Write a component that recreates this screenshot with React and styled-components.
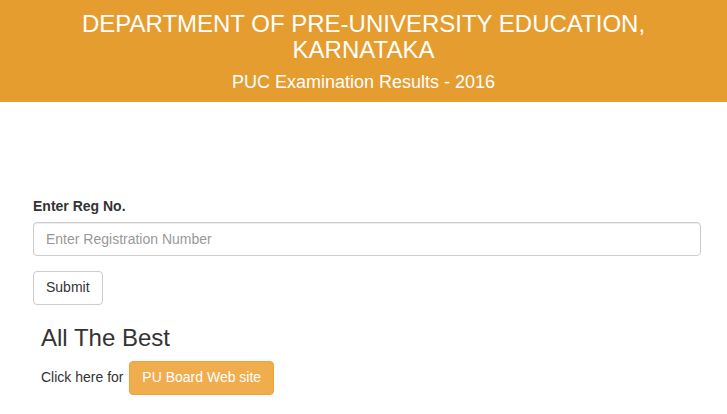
import React from "react";
import styled, { createGlobalStyle } from "styled-components";

const GlobalStyle = createGlobalStyle`
  * {
    box-sizing: border-box;
  }
  body {
    margin: 0;
    font-family: "Liberation Sans", Arial, Helvetica, sans-serif;
    font-size: 14px;
    line-height: 1.42857;
    color: #333;
    background: #fff;
  }
`;

const Header = styled.header`
  background-color: #e59d2f;
  color: #fff;
  text-align: center;
  padding: 11px 15px 9px;
  height: 102px;
`;

const Title = styled.h3`
  margin: 0 0 9px;
  font-size: 24px;
  font-weight: 400;
  line-height: 1.1;
`;

const SubTitle = styled.h4`
  margin: 0;
  font-size: 18px;
  font-weight: 400;
  line-height: 1.1;
`;

const Form = styled.form`
  padding: 95px 26px 0 33px;
`;

const FormGroup = styled.div`
  margin-bottom: 15px;
`;

const Label = styled.label`
  display: block;
  font-weight: 700;
  margin-bottom: 5px;
`;

const Input = styled.input`
  display: block;
  width: 100%;
  height: 34px;
  padding: 6px 12px;
  font-family: inherit;
  font-size: 14px;
  color: #555;
  background: #fff;
  border: 1px solid #ccc;
  border-radius: 4px;
  box-shadow: inset 0 1px 1px rgba(0, 0, 0, 0.075);
  outline: none;

  &::placeholder {
    color: #999;
  }
`;

const Button = styled.button`
  display: inline-block;
  height: 34px;
  padding: 6px 12px;
  margin-left: ${(p) => (p.$warning ? "2px" : "0")};
  font-family: inherit;
  font-size: 14px;
  line-height: 1.42857;
  border-radius: 4px;
  cursor: pointer;
  color: ${(p) => (p.$warning ? "#fff" : "#333")};
  background: ${(p) => (p.$warning ? "#f0ad4e" : "#fff")};
  border: 1px solid ${(p) => (p.$warning ? "#eea236" : "#ccc")};
`;

const Footer = styled.div`
  padding-left: 41px;
`;

const Wish = styled.h3`
  margin: 20px 0 10px;
  font-size: 24px;
  font-weight: 400;
  line-height: 1.1;
`;

const LinkRow = styled.p`
  margin: 0;
`;

export default function App() {
  return (
    <>
      <GlobalStyle />
      <Header>
        <Title>
          DEPARTMENT OF PRE-UNIVERSITY EDUCATION,
          <br />
          KARNATAKA
        </Title>
        <SubTitle>PUC Examination Results - 2016</SubTitle>
      </Header>
      <Form onSubmit={(e) => e.preventDefault()}>
        <FormGroup>
          <Label htmlFor="regno">Enter Reg No.</Label>
          <Input id="regno" type="text" placeholder="Enter Registration Number" />
        </FormGroup>
        <Button type="submit">Submit</Button>
      </Form>
      <Footer>
        <Wish>All The Best</Wish>
        <LinkRow>
          Click here for <Button $warning type="button">PU Board Web site</Button>
        </LinkRow>
      </Footer>
    </>
  );
}
